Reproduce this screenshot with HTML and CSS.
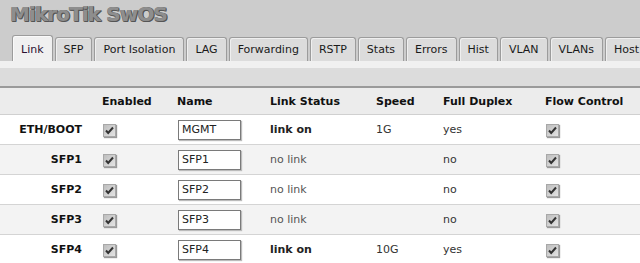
FILE: index.html
```html
<!DOCTYPE html>
<html>
<head>
<meta charset="utf-8">
<link rel="stylesheet" href="styles.css">
</head>
<body>
<div class="top">
  <div class="logo">MikroTik SwOS</div>
  <div class="tabs">
    <div class="tab active">Link</div>
    <div class="tab">SFP</div>
    <div class="tab">Port Isolation</div>
    <div class="tab">LAG</div>
    <div class="tab">Forwarding</div>
    <div class="tab">RSTP</div>
    <div class="tab">Stats</div>
    <div class="tab">Errors</div>
    <div class="tab">Hist</div>
    <div class="tab">VLAN</div>
    <div class="tab">VLANs</div>
    <div class="tab">Host</div>
  </div>
</div>
<div class="strip"></div>
<div class="bar"></div>
<table class="grid">
  <colgroup>
    <col class="c0"><col class="c1"><col class="c2"><col class="c3"><col class="c4"><col class="c5"><col class="c6">
  </colgroup>
  <thead>
    <tr><th></th><th>Enabled</th><th>Name</th><th>Link Status</th><th>Speed</th><th>Full Duplex</th><th>Flow Control</th></tr>
  </thead>
  <tbody>
    <tr>
      <td class="lbl">ETH/BOOT</td>
      <td><span class="cb"><svg width="13" height="13" viewBox="0 0 13 13"><path d="M3 6.5 L5.2 9 L10 3.5" fill="none" stroke="#333" stroke-width="2"/></svg></span></td>
      <td><input class="name" type="text" value="MGMT"></td>
      <td class="on">link on</td>
      <td>1G</td>
      <td>yes</td>
      <td><span class="cb"><svg width="13" height="13" viewBox="0 0 13 13"><path d="M3 6.5 L5.2 9 L10 3.5" fill="none" stroke="#333" stroke-width="2"/></svg></span></td>
    </tr>
    <tr>
      <td class="lbl">SFP1</td>
      <td><span class="cb"><svg width="13" height="13" viewBox="0 0 13 13"><path d="M3 6.5 L5.2 9 L10 3.5" fill="none" stroke="#333" stroke-width="2"/></svg></span></td>
      <td><input class="name" type="text" value="SFP1"></td>
      <td class="off">no link</td>
      <td></td>
      <td>no</td>
      <td><span class="cb"><svg width="13" height="13" viewBox="0 0 13 13"><path d="M3 6.5 L5.2 9 L10 3.5" fill="none" stroke="#333" stroke-width="2"/></svg></span></td>
    </tr>
    <tr>
      <td class="lbl">SFP2</td>
      <td><span class="cb"><svg width="13" height="13" viewBox="0 0 13 13"><path d="M3 6.5 L5.2 9 L10 3.5" fill="none" stroke="#333" stroke-width="2"/></svg></span></td>
      <td><input class="name" type="text" value="SFP2"></td>
      <td class="off">no link</td>
      <td></td>
      <td>no</td>
      <td><span class="cb"><svg width="13" height="13" viewBox="0 0 13 13"><path d="M3 6.5 L5.2 9 L10 3.5" fill="none" stroke="#333" stroke-width="2"/></svg></span></td>
    </tr>
    <tr>
      <td class="lbl">SFP3</td>
      <td><span class="cb"><svg width="13" height="13" viewBox="0 0 13 13"><path d="M3 6.5 L5.2 9 L10 3.5" fill="none" stroke="#333" stroke-width="2"/></svg></span></td>
      <td><input class="name" type="text" value="SFP3"></td>
      <td class="off">no link</td>
      <td></td>
      <td>no</td>
      <td><span class="cb"><svg width="13" height="13" viewBox="0 0 13 13"><path d="M3 6.5 L5.2 9 L10 3.5" fill="none" stroke="#333" stroke-width="2"/></svg></span></td>
    </tr>
    <tr>
      <td class="lbl">SFP4</td>
      <td><span class="cb"><svg width="13" height="13" viewBox="0 0 13 13"><path d="M3 6.5 L5.2 9 L10 3.5" fill="none" stroke="#333" stroke-width="2"/></svg></span></td>
      <td><input class="name" type="text" value="SFP4"></td>
      <td class="on">link on</td>
      <td>10G</td>
      <td>yes</td>
      <td><span class="cb"><svg width="13" height="13" viewBox="0 0 13 13"><path d="M3 6.5 L5.2 9 L10 3.5" fill="none" stroke="#333" stroke-width="2"/></svg></span></td>
    </tr>
  </tbody>
</table>
</body>
</html>
```
FILE: styles.css
```css
html, body {
  margin: 0;
  padding: 0;
  background: #fff;
  font-family: "DejaVu Sans", Verdana, sans-serif;
  font-size: 11px;
  color: #333;
  overflow: hidden;
}
.top {
  background: #cccccc;
  height: 61px;
  display: flex;
  flex-direction: column;
}
.logo {
  font-family: "DejaVu Sans", Verdana, sans-serif;
  font-weight: bold;
  font-size: 20px;
  letter-spacing: -0.9px;
  color: #8e8e8e;
  text-shadow: 1px 1px 0 #555, 0 1px 0 #666, 1px 0 0 #666, -0.5px 0 0 #888;
  padding: 2px 0 0 10px;
  height: 33px;
  box-sizing: border-box;
  line-height: 24px;
}
.tabs {
  display: flex;
  align-items: flex-end;
  gap: 2px;
  padding-left: 12px;
  height: 28px;
  white-space: nowrap;
  overflow: hidden;
}
.tab {
  flex: none;
  height: 23px;
  line-height: 23px;
  padding: 0 8px;
  border: 1px solid #9c9c9c;
  border-bottom: none;
  border-radius: 3px 3px 0 0;
  background: #dcdcdc;
  box-shadow: inset 1px 1px 0 #efefef;
  color: #1a1a1a;
}
.tab.active {
  height: 25px;
  line-height: 27px;
  background: #f0f0f0;
  box-shadow: inset 1px 1px 0 #fafafa;
  color: #2a1030;
}
.strip {
  height: 7px;
  background: #f0f0f0;
}
.bar {
  height: 18px;
  background: #dcdcdc;
  border-bottom: 2px solid #9a9a9a;
}
.grid {
  border-collapse: collapse;
  table-layout: fixed;
  width: 640px;
}
.c0 { width: 92px; }
.c1 { width: 75px; }
.c2 { width: 93px; }
.c3 { width: 106px; }
.c4 { width: 67px; }
.c5 { width: 102px; }
.c6 { width: 105px; }
.grid thead tr {
  background: #ececec;
}
.grid th {
  height: 26px;
  padding: 0 0 0 10px;
  text-align: left;
  font-weight: bold;
  color: #111;
  border-bottom: 1px solid #d0d0d0;
  white-space: nowrap;
}
.grid td {
  height: 29px;
  padding: 0 0 0 10px;
  border-bottom: 1px solid #d4d4d4;
  white-space: nowrap;
  vertical-align: middle;
}
.grid tbody tr:nth-child(even) {
  background: #f3f3f3;
}
.grid td.lbl {
  text-align: right;
  padding: 0 10px 0 0;
  font-weight: bold;
  color: #111;
}
.on {
  font-weight: bold;
  color: #222;
}
.off {
  color: #555;
}
.cb {
  display: inline-block;
  width: 13px;
  height: 13px;
  margin: 2px 0 0 1px;
  background: linear-gradient(135deg, #bdbdbd, #e4e4e4);
  border: 1px solid #a8a8a8;
  box-sizing: border-box;
  box-shadow: 1px 1px 1px #9a9a9a;
  vertical-align: middle;
  position: relative;
}
.cb svg {
  position: absolute;
  left: -1px;
  top: -1px;
}
.name {
  width: 63px;
  height: 20px;
  box-sizing: border-box;
  margin: 0 0 0 1px;
  padding: 0 3px;
  border: 1px solid #7a7a7a;
  box-shadow: 1px 1px 1px #bbb;
  font-family: "DejaVu Sans", Verdana, sans-serif;
  font-size: 11px;
  color: #222;
  background: #fff;
  vertical-align: middle;
}
```
